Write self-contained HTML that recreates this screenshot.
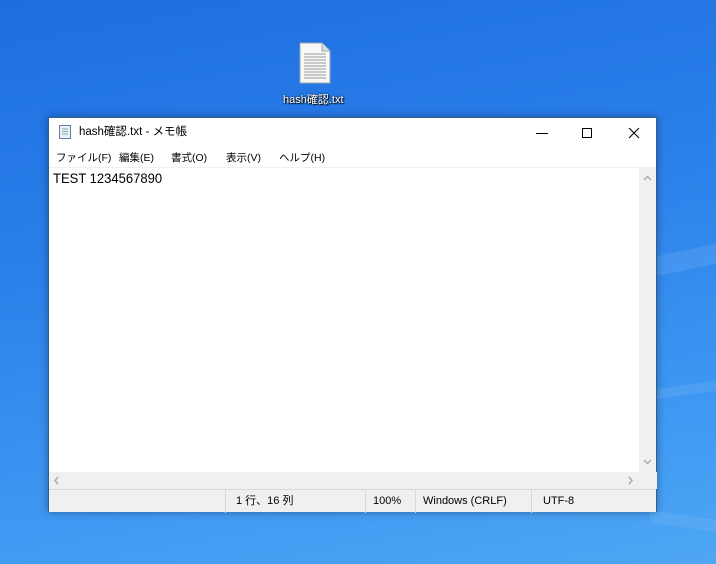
<!DOCTYPE html>
<html><head><meta charset="utf-8"><style>
*{margin:0;padding:0;box-sizing:border-box}
body{width:716px;height:564px;overflow:hidden;position:relative;font-family:"Liberation Sans","Noto Sans CJK JP",sans-serif;
background:linear-gradient(170deg,#1d6ee0 0%,#2b80ea 40%,#3e97f2 75%,#4ea6f4 100%);}
span{white-space:nowrap;line-height:13px}
.streak{position:absolute;background:rgba(150,200,250,.18)}
.win{position:absolute;left:48px;top:117px;width:609px;height:395px;background:#fff;border:1px solid #2f5f95;box-shadow:0 0 8px rgba(0,0,0,.35)}
.title{position:absolute;left:0;top:0;width:100%;height:29px;font-size:11.5px;color:#000}
.title span{position:absolute;left:30px;top:8px}
.menu{position:absolute;top:29px;left:0;width:100%;height:21px;font-size:10.5px;border-bottom:1px solid #f0f0f0}
.menu span{position:absolute;top:5px}
.edit{position:absolute;top:50px;left:0;width:591px;height:304px;font-size:14px;padding:1px 4px;transform-origin:0 0}
.vs{position:absolute;right:0;top:50px;width:17px;height:304px;background:#f0f0f0}
.hs{position:absolute;left:0;top:354px;width:100%;height:17px;background:#f0f0f0}
.sb{position:absolute;left:0;top:371px;width:100%;height:23px;background:#f0f0f0;border-top:1px solid #d8d8d8;font-size:11px}
.sb span{position:absolute;top:5px}
.sep{position:absolute;top:0;width:1px;height:23px;background:#d8d8d8}
</style></head><body>
<div class="streak" style="left:656px;top:250px;width:60px;height:20px;transform:skewY(-12deg)"></div>
<div class="streak" style="left:656px;top:385px;width:60px;height:10px;transform:skewY(-8deg)"></div>
<div class="streak" style="left:650px;top:515px;width:66px;height:12px;transform:skewY(8deg)"></div>
<svg style="position:absolute;left:298px;top:42px" width="34" height="42" viewBox="0 0 34 42">
<path d="M2 1H24L32 9V41H2Z" fill="#f8f8f8" stroke="#9aa"/><path d="M24 1V9H32" fill="#ddd" stroke="#9aa"/>
<g stroke="#999"><path d="M6 12H28M6 15H28M6 18H28M6 21H28M6 24H28M6 27H28M6 30H28M6 33H28M6 36H28"/></g></svg>
<div style="position:absolute;left:283px;top:91px;font-size:11px;color:#fff;text-shadow:0 0 2px #000,1px 1px 1px #000">hash確認.txt</div>
<div class="win">
<div class="title">
<svg style="position:absolute;left:9px;top:6px" width="14" height="16"><rect x="1.5" y="1.5" width="11" height="13" fill="#e8f0f8" stroke="#6a7f9a"/><path d="M4 5H10M4 7.5H10M4 10H10" stroke="#8aa"/></svg>
<span>hash確認.txt - メモ帳</span>
<svg style="position:absolute;left:484px;top:8px" width="120" height="14"><path d="M3 7.5H15" stroke="#000"/><rect x="49.5" y="2.5" width="9" height="9" fill="none" stroke="#000"/><path d="M96 2L106 12M106 2L96 12" stroke="#000"/></svg>
</div>
<div class="menu"><span style="left:7px">ファイル(F)</span><span style="left:70px">編集(E)</span><span style="left:122px">書式(O)</span><span style="left:177px">表示(V)</span><span style="left:230px">ヘルプ(H)</span></div>
<div class="edit"><span style="display:inline-block;transform:scaleX(0.93);transform-origin:0 0;line-height:18px">TEST 1234567890</span></div>
<div class="vs"><svg width="17" height="304"><path d="M5 12L8.5 8.5L12 12" stroke="#aaa" fill="none" stroke-width="1.5"/><path d="M5 292L8.5 295.5L12 292" stroke="#aaa" fill="none" stroke-width="1.5"/></svg></div>
<div class="hs" style="width:591px"><svg width="591" height="17"><path d="M9 5L6 8.5L9 12" stroke="#aaa" fill="none" stroke-width="1.5"/><path d="M580 5L583 8.5L580 12" stroke="#aaa" fill="none" stroke-width="1.5"/></svg></div>
<div class="hs" style="left:591px;width:17px"></div>
<div class="sb">
<div class="sep" style="left:176px"></div><div class="sep" style="left:316px"></div><div class="sep" style="left:366px"></div><div class="sep" style="left:482px"></div>
<span style="left:187px">1 行、16 列</span><span style="left:324px">100%</span><span style="left:374px">Windows (CRLF)</span><span style="left:494px">UTF-8</span>
</div>
</div>
</body></html>
